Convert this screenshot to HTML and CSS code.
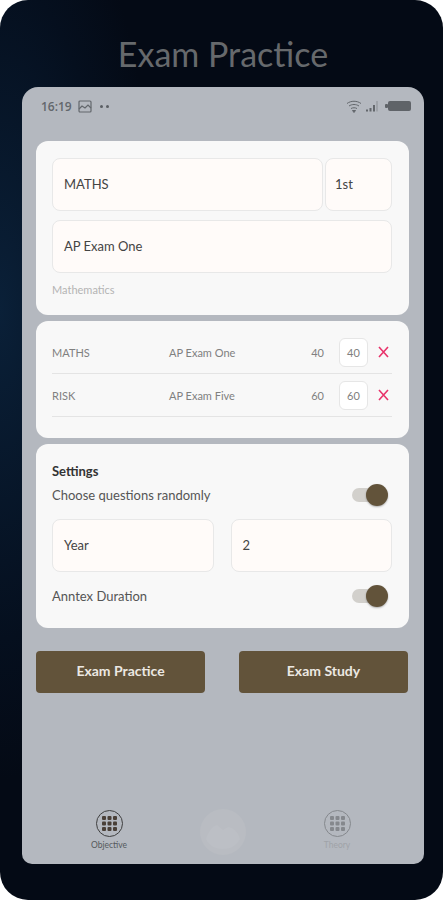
FILE: index.html
```html
<!DOCTYPE html>
<html lang="en">
<head>
    <meta charset="UTF-8">
    <meta name="viewport" content="width=device-width, initial-scale=1.0">
    <title>Exam Practice</title>
    <link rel="stylesheet" href="styles.css">
</head>
<body>
    <div class="frame">
        <h1 class="page-title">Exam Practice</h1>
        <div class="screen">
            <div class="status-bar">
                <div class="status-left">
                    <span class="clock">16:19</span>
                    <svg width="14" height="13" viewBox="0 0 14 13" fill="none" stroke="#63676c" stroke-width="1.2">
                        <rect x="1" y="1" width="12" height="11" rx="1"/>
                        <path d="M1 9l3-3 3 2 3-3 3 3"/>
                    </svg>
                    <span class="dots"><i></i><i></i></span>
                </div>
                <div class="status-right">
                    <svg width="16" height="13" viewBox="0 0 16 13" fill="none" stroke="#63676c" stroke-width="1">
                        <path d="M1 3.500c4-3 10-3 14 0"/>
                        <path d="M3 6c3-2 7-2 10 0"/>
                        <path d="M5 8.500c2-1 4-1 6 0"/>
                        <path d="M6.500 10.500h3L8 12.500z" fill="#63676c"/>
                    </svg>
                    <svg width="14" height="13" viewBox="0 0 14 13" fill="#63676c">
                        <rect x="1" y="9.500" width="2" height="2"/>
                        <rect x="4.500" y="8" width="2" height="3.500"/>
                        <rect x="8" y="5" width="2" height="6.500"/>
                        <rect x="11.500" y="1" width="1" height="10.500" fill="#8a8e94"/>
                    </svg>
                    <svg class="battery" width="26" height="10" viewBox="0 0 26 10" fill="#5f6368">
                        <rect x="3" y="0" width="23" height="10" rx="2"/>
                        <rect x="0" y="3" width="3" height="4" rx="1"/>
                    </svg>
                </div>
            </div>

            <section class="card subject-card">
                <div class="field-row first-row">
                    <div class="field field-grow">MATHS</div>
                    <div class="field field-term">1st</div>
                </div>
                <div class="field">AP Exam One</div>
                <p class="hint">Mathematics</p>
            </section>

            <section class="card list-card">
                <div class="list-row">
                    <span class="col-subject">MATHS</span>
                    <span class="col-exam">AP Exam One</span>
                    <span class="col-count">40</span>
                    <span class="qty">40</span>
                    <svg class="remove" width="11" height="12" viewBox="0 0 11 12" fill="none" stroke="#e8326a" stroke-width="1.6">
                        <path d="M1 1l9 10M10 1L1 11"/>
                    </svg>
                </div>
                <div class="list-row">
                    <span class="col-subject">RISK</span>
                    <span class="col-exam">AP Exam Five</span>
                    <span class="col-count">60</span>
                    <span class="qty">60</span>
                    <svg class="remove" width="11" height="12" viewBox="0 0 11 12" fill="none" stroke="#e8326a" stroke-width="1.6">
                        <path d="M1 1l9 10M10 1L1 11"/>
                    </svg>
                </div>
            </section>

            <section class="card settings-card">
                <h2 class="settings-title">Settings</h2>
                <div class="switch-row">
                    <span>Choose questions randomly</span>
                    <span class="switch"><i></i></span>
                </div>
                <div class="field-row year-row">
                    <div class="field field-half">Year</div>
                    <div class="field field-half">2</div>
                </div>
                <div class="switch-row">
                    <span>Anntex Duration</span>
                    <span class="switch"><i></i></span>
                </div>
            </section>

            <div class="actions">
                <button class="btn">Exam Practice</button>
                <button class="btn">Exam Study</button>
            </div>

            <nav class="bottom-nav">
                <div class="nav-item active">
                    <span class="nav-icon">
                        <svg width="15" height="15" viewBox="0 0 15 15" fill="#4a4038">
                            <rect x="0" y="0" width="4" height="4" rx="1"/><rect x="5.500" y="0" width="4" height="4" rx="1"/><rect x="11" y="0" width="4" height="4" rx="1"/>
                            <rect x="0" y="5.500" width="4" height="4" rx="1"/><rect x="5.500" y="5.500" width="4" height="4" rx="1"/><rect x="11" y="5.500" width="4" height="4" rx="1"/>
                            <rect x="0" y="11" width="4" height="4" rx="1"/><rect x="5.500" y="11" width="4" height="4" rx="1"/><rect x="11" y="11" width="4" height="4" rx="1"/>
                        </svg>
                    </span>
                    <span>Objective</span>
                </div>
                <div class="nav-logo">
                    <svg width="46" height="46" viewBox="0 0 46 46">
                        <circle cx="23" cy="23" r="23" fill="#b9bcc2"/>
                        <path d="M6 30c3-9 7-13 11-14l6 5 5-3c6 1 10 5 12 12-4 7-10 10-17 10S9 37 6 30z" fill="#bcbfc5"/>
                    </svg>
                </div>
                <div class="nav-item">
                    <span class="nav-icon">
                        <svg width="15" height="15" viewBox="0 0 15 15" fill="#85888d">
                            <rect x="0" y="0" width="4" height="4" rx="1"/><rect x="5.500" y="0" width="4" height="4" rx="1"/><rect x="11" y="0" width="4" height="4" rx="1"/>
                            <rect x="0" y="5.500" width="4" height="4" rx="1"/><rect x="5.500" y="5.500" width="4" height="4" rx="1"/><rect x="11" y="5.500" width="4" height="4" rx="1"/>
                            <rect x="0" y="11" width="4" height="4" rx="1"/><rect x="5.500" y="11" width="4" height="4" rx="1"/><rect x="11" y="11" width="4" height="4" rx="1"/>
                        </svg>
                    </span>
                    <span>Theory</span>
                </div>
            </nav>
        </div>
    </div>
</body>
</html>
```

FILE: styles.css
```css
* {
    box-sizing: border-box;
}
html, body {
    margin: 0;
    padding: 0;
    background-color: #fff;
}
body {
    width: 443px;
    height: 900px;
    overflow: hidden;
    font-family: Lato, "Open Sans", sans-serif;
    color: #3c3c3c;
}
.frame {
    width: 443px;
    height: 900px;
    padding: 0 19px 36px 22px;
    display: flex;
    flex-direction: column;
    border-radius: 28px;
    background: radial-gradient(ellipse 160px 470px at 0 310px, #0a2038 0%, #050f1e 70%, #040a15 100%);
}
.page-title {
    margin: 33px 0 0;
    height: 54px;
    text-align: center;
    font-weight: 400;
    font-size: 34px;
    line-height: 42px;
    color: #66696c;
}
.screen {
    flex: 1;
    padding: 0 15px 0 14px;
    display: flex;
    flex-direction: column;
    background-color: #b4b8bf;
    border-radius: 16px 16px 10px 10px;
}
.status-bar {
    height: 54px;
    margin-right: -2px;
    padding: 0 0 16px 5px;
    display: flex;
    align-items: center;
    justify-content: space-between;
}
.status-left, .status-right {
    display: flex;
    align-items: center;
    gap: 6px;
}
.clock {
    font-family: "Open Sans", sans-serif;
    font-size: 12px;
    font-weight: 600;
    color: #63676c;
}
.dots {
    display: flex;
    gap: 3px;
    margin-left: 2px;
}
.dots i {
    width: 3px;
    height: 3px;
    border-radius: 50%;
    background-color: #5a5e63;
}
.status-right {
    gap: 3px;
}
.battery {
    margin-left: 3px;
}
.card {
    background-color: #f8f8f8;
    border-radius: 12px;
}
.subject-card {
    height: 174px;
    padding: 17px 17px 0 16px;
}
.field {
    height: 53px;
    padding: 0 11px 2px;
    display: flex;
    align-items: center;
    font-size: 13px;
    color: #444;
    background-color: #fffbf9;
    border: 1px solid #e8e8e8;
    border-radius: 8px;
}
.field-row {
    display: flex;
}
.first-row {
    gap: 2px;
    margin-bottom: 9px;
}
.field-grow {
    flex: 1;
}
.field-term {
    width: 67px;
    padding-left: 9px;
}
.hint {
    margin: 10px 0 0;
    font-size: 11px;
    color: #b4b4b4;
}
.list-card {
    height: 117px;
    margin-top: 6px;
    padding: 10px 17px 0 16px;
}
.list-row {
    height: 43px;
    display: flex;
    align-items: center;
    font-size: 11px;
    color: #808080;
    border-bottom: 1px solid #e4e4e4;
}
.col-subject {
    width: 117px;
}
.col-exam {
    flex: 1;
}
.qty {
    width: 29px;
    height: 29px;
    margin-left: 15px;
    display: flex;
    align-items: center;
    justify-content: center;
    background-color: #fff;
    border: 1px solid #e6e6e6;
    border-radius: 6px;
}
.remove {
    margin: 0 3px 0 10px;
}
.settings-card {
    height: 184px;
    margin-top: 6px;
    padding: 20px 17px 0 16px;
}
.settings-title {
    margin: 0 0 5px;
    font-size: 13px;
    line-height: 14px;
    font-weight: 700;
    color: #333;
}
.switch-row {
    height: 24px;
    display: flex;
    align-items: center;
    justify-content: space-between;
    font-size: 13px;
    color: #555;
}
.year-row {
    margin: 12px 0;
    gap: 17px;
}
.field-half {
    flex: 1;
}
.switch {
    position: relative;
    width: 32px;
    height: 14px;
    margin-right: 8px;
    border-radius: 7px;
    background-color: #d2d0cc;
}
/* knob hangs over the end of the track */
.switch i {
    position: absolute;
    right: -4px;
    top: -4px;
    width: 22px;
    height: 22px;
    border-radius: 50%;
    background-color: #62533a;
    box-shadow: 0 1px 2px rgba(0, 0, 0, 0.3);
}
.actions {
    margin-top: 23px;
    display: flex;
    gap: 34px;
}
.btn {
    width: 169px;
    height: 42px;
    padding: 0 0 3px;
    border: none;
    border-radius: 4px;
    font-family: Lato, sans-serif;
    font-size: 14px;
    font-weight: 700;
    color: #ece8e2;
    background-color: #62533a;
}
.bottom-nav {
    margin-top: auto;
    height: 72px;
    padding: 17px 52px 0 53px;
    display: flex;
    align-items: flex-start;
    justify-content: space-between;
}
.nav-item {
    width: 40px;
    margin-top: 1px;
    display: flex;
    flex-direction: column;
    align-items: center;
    gap: 3px;
    font-size: 8.500px;
    line-height: 11px;
    color: #a0a3a8;
}
.nav-item.active {
    color: #55585c;
}
.nav-icon {
    width: 27px;
    height: 27px;
    flex: none;
    display: flex;
    align-items: center;
    justify-content: center;
    border: 1.500px solid #85888d;
    border-radius: 50%;
}
.nav-item.active .nav-icon {
    border-color: #3f3f3f;
}
.nav-logo {
    display: flex;
}
```
